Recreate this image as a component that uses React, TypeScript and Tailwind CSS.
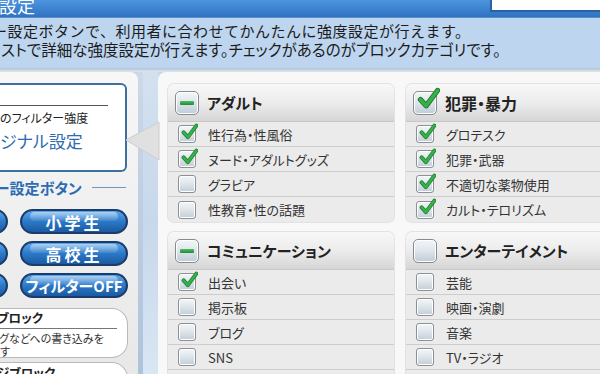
import React from "react";

const FONT = "font-['Noto_Sans_CJK_JP','Noto_Sans',sans-serif]";
const PALT = "[font-feature-settings:'palt']";

function Check({ size }: { size: number }) {
  return (
    <svg
      className="absolute pointer-events-none"
      style={{ left: size * 0.12, top: -size * 0.18, width: size * 0.95, height: size * 1.0 }}
      viewBox="0 0 20 20"
    >
      <path d="M3 10.5 L8 16 L18 2.5" fill="none" stroke="#1f7a2c" strokeWidth="4.6" strokeLinecap="round" strokeLinejoin="round" />
      <path d="M3 10.5 L8 16 L18 2.5" fill="none" stroke="#35b04a" strokeWidth="3" strokeLinecap="round" strokeLinejoin="round" />
    </svg>
  );
}

function Box({ checked, big, dash }: { checked?: boolean; big?: boolean; dash?: boolean }) {
  const s = big ? 24 : 18;
  return (
    <div
      className={
        big
          ? "relative w-[24px] h-[24px] shrink-0 rounded-[5px] border-[1.5px] border-[#858b91] bg-gradient-to-b from-[#f3f6f8] via-[#dde5eb] to-[#bfcbd4] shadow-[inset_0_0_0_1px_#ffffff]"
          : "relative w-[18px] h-[18px] shrink-0 rounded-[3px] border-[1.5px] border-[#8a9096] bg-gradient-to-b from-[#f3f6f8] via-[#dde5eb] to-[#c2cdd6] shadow-[inset_0_0_0_1px_#ffffff]"
      }
    >
      {dash && (
        <div className="absolute left-[4px] right-[4px] top-[9px] h-[4px] rounded-[1px] bg-gradient-to-b from-[#4cc05c] to-[#23893a]" />
      )}
      {checked && <Check size={s} />}
    </div>
  );
}

type Item = { label: string; checked?: boolean };

function Category({ title, state, items, big }: { title: string; state: "none" | "dash" | "check"; items: Item[]; big?: boolean }) {
  return (
    <div className={"rounded-[6px] bg-[#ebebeb] overflow-hidden shadow-[0_0_0_1px_#e2e2e2] " + PALT}>
      <div className="h-[38px] flex items-center pl-[7px] gap-[8px] bg-gradient-to-b from-[#f8f8f8] via-[#ececec] to-[#d6d6d6] border-b border-[#c8c8c8]">
        <Box big dash={state === "dash"} checked={state === "check"} />
        <span className={"font-bold text-[#222] leading-none " + (big ? "text-[16px]" : "text-[15px]")}>{title}</span>
      </div>
      {items.map((it, i) => (
        <div
          key={i}
          className={
            "h-[25px] flex items-center pl-[10px] gap-[12px] " +
            (i < items.length - 1 ? "border-b border-[#cdcdcd]" : "")
          }
        >
          <Box checked={it.checked} />
          <span className="text-[13px] text-[#333] leading-none">{it.label}</span>
        </div>
      ))}
    </div>
  );
}

function BlueBtn({ label, wide }: { label: string; wide?: boolean }) {
  return (
    <div className="relative w-[108px] h-[25px] shrink-0 rounded-full border-2 border-[#1b3c6a] bg-gradient-to-b from-[#5aa6ea] via-[#2c79c8] to-[#1a5aa2] flex items-center justify-center overflow-hidden">
      <div className="absolute left-[8px] right-[8px] top-[1px] h-[9px] rounded-full bg-gradient-to-b from-[#ffffff80] to-[#ffffff10]" />
      <span className={"relative text-white font-bold leading-none " + (wide ? "text-[15px]" : "text-[16px] tracking-[3px]")}>{label}</span>
    </div>
  );
}

export default function App() {
  return (
    <div className={"relative w-[600px] h-[374px] overflow-hidden bg-[#c8d9ec] " + FONT}>
      {/* Title bar */}
      <div className="h-[17px] flex justify-between bg-gradient-to-b from-[#4d95de] to-[#2f72c2] overflow-hidden">
        <span className="text-white text-[18px] leading-none -mt-[4px] ml-[-1px]">設定</span>
        <div className="w-[110px] h-[12px] bg-white border-l-2 border-b-2 border-[#2a62a8]" />
      </div>
      {/* Description */}
      <div className="h-[51px] bg-[#bdd5ee] border-t border-[#5b8fca] pt-[4px] text-[#1c1c1c] leading-[18px] whitespace-nowrap">
        <div className="ml-[-8px] text-[15px] tracking-[0.5px]">ー設定ボタンで、利用者に合わせてかんたんに強度設定が行えます。</div>
        <div className={"ml-[1px] text-[15.5px] " + PALT}>ストで詳細な強度設定が行えます。チェックがあるのがブロックカテゴリです。</div>
      </div>
      <div className="h-[4px] bg-gradient-to-b from-[#b2c2d2] to-[#dfe8f2]" />

      {/* Main */}
      <div className="flex h-[302px] bg-gradient-to-r from-[#c4d6ea] to-[#cfdeee]">
        {/* Left panel */}
        <div className={"w-[138px] shrink-0 bg-gradient-to-b from-[#f7f7f7] to-[#e8e8e8] rounded-tr-[8px] pt-[11px] overflow-hidden " + PALT}>
          <div className="w-[127px] h-[89px] bg-white border-2 border-l-0 border-[#3f6f9c] rounded-r-[6px] pt-[20px]">
            <div className="w-[108px] h-px bg-[#555]" />
            <div className="text-[12px] text-[#222] leading-none mt-[6px] whitespace-nowrap">のフィルター強度</div>
            <div className="text-[17px] text-[#2c6cb0] leading-none mt-[8px] whitespace-nowrap">ジナル設定</div>
          </div>
          <div className="flex items-center mt-[8px] h-[14px]">
            <span className="text-[15px] font-bold text-[#2b6cb4] leading-none ml-[-5px] whitespace-nowrap">ー設定ボタン</span>
            <div className="ml-[10px] w-[34px] h-px bg-[#6f97c2]" />
          </div>
          <div className="flex flex-col gap-[7px] mt-[15px] ml-[-100px]">
            <div className="flex gap-[12px]">
              <BlueBtn label="中学生" />
              <BlueBtn label="小学生" />
            </div>
            <div className="flex gap-[12px]">
              <BlueBtn label="大学生" />
              <BlueBtn label="高校生" />
            </div>
            <div className="flex gap-[12px]">
              <BlueBtn label="標準" />
              <BlueBtn label="フィルターOFF" wide />
            </div>
          </div>
          <div className="mt-[10px] w-[128px] h-[50px] bg-white border border-l-0 border-[#b9b9b9] rounded-r-[16px] pt-[2px]">
            <div className="text-[12.5px] font-bold text-[#222] leading-[13px] ml-[-3px] whitespace-nowrap">ブロック</div>
            <div className="w-[117px] h-px bg-[#777] mt-[4px]" />
            <div className="text-[11px] text-[#333] leading-[13px] mt-[3px] whitespace-nowrap ml-[-1px]">グなどへの書き込みを</div>
            <div className="text-[11px] text-[#333] leading-[13px] whitespace-nowrap">す</div>
          </div>
          <div className="mt-[4px] w-[128px] h-[40px] bg-white border border-l-0 border-[#b9b9b9] rounded-r-[16px] pt-[3px]">
            <div className="text-[12.5px] font-bold text-[#222] leading-[13px] ml-[-3px] whitespace-nowrap">ジブロック</div>
          </div>
        </div>

        {/* gap strip */}
        <div className="w-[20px] shrink-0 flex">
          <div className="w-[5px] bg-gradient-to-b from-[#cbd9e8] to-[#aec3da]" />
          <div className="flex-1 bg-gradient-to-b from-[#d3e1ef] via-[#c7d8eb] to-[#d9e6f3]" />
        </div>

        {/* Right panel */}
        <div className="flex-1 bg-[#f8f8f8] rounded-tl-[8px] pt-[12px] pl-[10px] overflow-hidden">
          <div className="grid grid-cols-[226px_226px] gap-x-[12px] gap-y-[10px]">
            <Category
              title="アダルト"
              state="dash"
              items={[
                { label: "性行為・性風俗", checked: true },
                { label: "ヌード・アダルトグッズ", checked: true },
                { label: "グラビア" },
                { label: "性教育・性の話題" },
              ]}
            />
            <Category
              title="犯罪・暴力"
              state="check"
              big
              items={[
                { label: "グロテスク", checked: true },
                { label: "犯罪・武器", checked: true },
                { label: "不適切な薬物使用", checked: true },
                { label: "カルト・テロリズム", checked: true },
              ]}
            />
            <Category
              title="コミュニケーション"
              state="dash"
              items={[
                { label: "出会い", checked: true },
                { label: "掲示板" },
                { label: "ブログ" },
                { label: "SNS" },
                { label: "ネット上の掲示板" },
              ]}
            />
            <Category
              title="エンターテイメント"
              state="none"
              items={[
                { label: "芸能" },
                { label: "映画・演劇" },
                { label: "音楽" },
                { label: "TV・ラジオ" },
                { label: "漫画" },
              ]}
            />
          </div>
        </div>
      </div>

      {/* Pointer from the strength box to the category panel */}
      <svg className="absolute left-[126px] top-[120px] w-[34px] h-[44px]" viewBox="0 0 34 44">
        <polygon points="0,20 33,2 33,40" fill="#e0e0e0" stroke="#cccccc" strokeWidth="1" />
      </svg>
    </div>
  );
}
